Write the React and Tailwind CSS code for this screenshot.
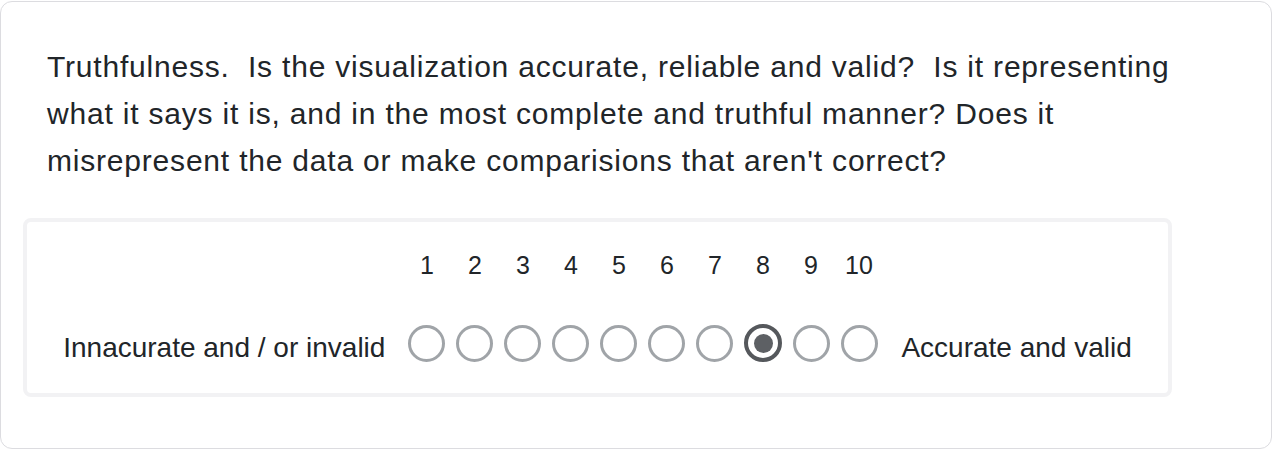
import React from "react";

const font = { fontFamily: '"Liberation Sans", Arial, Helvetica, sans-serif' };

function Radio({ checked }) {
  if (checked) {
    return (
      <div className="w-[38px] h-[38px] rounded-full border-[4px] border-[#55585c] flex items-center justify-center shrink-0">
        <div className="w-[19px] h-[19px] rounded-full bg-[#5d6064]" />
      </div>
    );
  }
  return <div className="w-[37px] h-[37px] rounded-full border-[3px] border-[#a0a4a8] shrink-0" />;
}

export default function App() {
  const nums = [1, 2, 3, 4, 5, 6, 7, 8, 9, 10];
  return (
    <div className="w-[1274px] h-[450px] bg-white" style={font}>
      <div className="w-[1272px] h-[448px] mt-[1px] border border-[#dcdce0] rounded-[12px] pt-[41px] pl-[22px]">
        <p className="w-[1165px] pl-[24px] text-[30px] leading-[47px] tracking-[0.8px] text-[#212529]">
          Truthfulness.{"\u00a0"} Is the visualization accurate, reliable and valid?{"\u00a0"} Is it representing what it says it is, and in the most complete and truthful manner? Does it misrepresent the data or make comparisions that aren't correct?
        </p>
        <div className="mt-[34px] w-[1149px] h-[179px] border-[4px] border-[#f2f2f4] rounded-[8px] flex justify-center items-start pt-[28px]">
          <div className="grid grid-cols-[auto_auto_auto] gap-x-[23px] gap-y-[42px] items-center text-[#212529]">
            <div />
            <div className="flex gap-[11px]">
              {nums.map((n) => (
                <div key={n} className="w-[37px] text-center text-[25px] leading-[30px]">
                  {n}
                </div>
              ))}
            </div>
            <div />
            <div className="text-[28px] leading-[32px] mt-[10px]">Innacurate and / or invalid</div>
            <div className="flex gap-[11px] items-center">
              {nums.map((n) => (
                <Radio key={n} checked={n === 8} />
              ))}
            </div>
            <div className="text-[28px] leading-[32px] mt-[10px]">Accurate and valid</div>
          </div>
        </div>
      </div>
    </div>
  );
}
